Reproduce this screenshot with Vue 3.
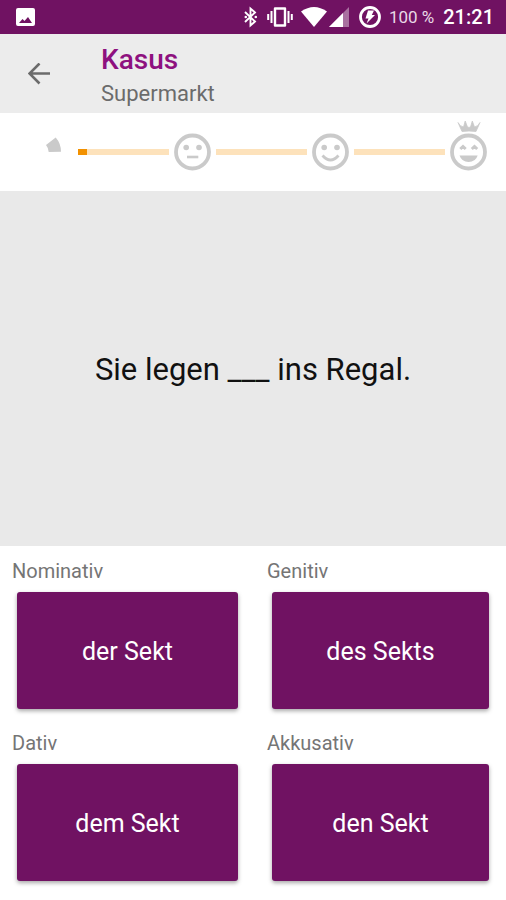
<script setup>
import { ref } from 'vue'

const progress = ref([10, 0, 0])
const faces = ['neutral', 'happy', 'champion']
const answers = [
  { id: 'nominativ', label: 'Nominativ', text: 'der Sekt' },
  { id: 'genitiv', label: 'Genitiv', text: 'des Sekts' },
  { id: 'dativ', label: 'Dativ', text: 'dem Sekt' },
  { id: 'akkusativ', label: 'Akkusativ', text: 'den Sekt' }
]
</script>

<template>
  <div class="screen">
    <div class="status">
      <svg class="picture" width="19" height="19" viewBox="0 0 19 19" aria-hidden="true">
        <path fill="#fff" fill-rule="evenodd" d="M2 0H17Q19 0 19 2V16Q19 18 17 18H2Q0 18 0 16V2Q0 0 2 0ZM3 15H16L12 9L8.500 13L6.500 11Z" />
      </svg>
      <svg class="bluetooth" width="14" height="22" viewBox="0 0 14 22" aria-hidden="true">
        <path d="M1 6L11 15.500L6.500 19.500V2.500L11 6.500L1 16" fill="none" stroke="#fff" stroke-width="1.900" />
        <circle cx="1.800" cy="11" r="1.300" fill="#fff" />
        <circle cx="11.800" cy="11" r="1.300" fill="#fff" />
      </svg>
      <svg class="vibrate" width="26" height="20" viewBox="0 0 26 20" aria-hidden="true">
        <path d="M8 1.500H18V18.500H8Z" fill="none" stroke="#fff" stroke-width="2.400" stroke-linejoin="round" />
        <path d="M4.500 4V16M1.200 7V13M21.500 4V16M24.800 7V13" stroke="#fff" stroke-width="2" />
      </svg>
      <svg class="wifi" width="26" height="20" viewBox="0 0 26 20" aria-hidden="true">
        <path d="M0 4.500Q13 -4.500 26 4.500L13 20Z" fill="#fff" />
      </svg>
      <svg class="signal" width="20" height="20" viewBox="0 0 20 20" aria-hidden="true">
        <path d="M0 20L20 0V20Z" fill="#fff" fill-opacity=".4" />
        <path d="M0 20L14 6V20Z" fill="#fff" />
      </svg>
      <svg class="battery" width="22" height="22" viewBox="0 0 22 22" aria-hidden="true">
        <circle cx="11" cy="11" r="9.500" fill="none" stroke="#fff" stroke-width="2.800" />
        <path d="M9 4.500H15L12.800 9H16L7.500 17.500L9.500 12.500H6.500Z" fill="#fff" />
      </svg>
      <span class="percent">100 %</span>
      <span class="clock">21:21</span>
    </div>

    <header class="bar">
      <button class="back" type="button" aria-label="Zurück">
        <svg width="22" height="22" viewBox="0 0 22 22" aria-hidden="true">
          <path d="M22 10.500H2M11.500 .500L1.500 10.500L11.500 20.500" fill="none" stroke="#6b6b6b" stroke-width="2.600" />
        </svg>
      </button>
      <div class="headings">
        <h1 class="title">Kasus</h1>
        <p class="subtitle">Supermarkt</p>
      </div>
    </header>

    <div class="progress">
      <svg class="face" width="37" height="58" viewBox="0 0 37 58" aria-hidden="true">
        <path d="M10 22L19.700 14.500Q25 20.500 25 28.700L12.700 29Q12.500 25 10 22Z" fill="#cacaca" />
      </svg>
      <template v-for="(face, i) in faces" :key="face">
        <div class="track"><div class="fill" :style="{ width: progress[i] + '%' }"></div></div>
        <svg class="face" width="37" height="58" viewBox="0 0 37 58" aria-hidden="true">
          <circle cx="18.500" cy="29" r="16.500" fill="none" stroke="#cacaca" stroke-width="3.800" />
          <template v-if="face !== 'champion'">
            <circle cx="12.200" cy="24.500" r="2.800" fill="#cacaca" />
            <circle cx="25" cy="24.500" r="2.800" fill="#cacaca" />
          </template>
          <path v-if="face === 'neutral'" d="M13 34H24.300" stroke="#cacaca" stroke-width="2.600" />
          <path v-if="face === 'happy'" d="M10.500 32.500Q18.500 41.500 26.500 32.500" fill="none" stroke="#cacaca" stroke-width="2.800" />
          <template v-if="face === 'champion'">
            <path d="M10.300 26L13 23.500L15.700 26M21.800 26L24.500 23.500L27.200 26" fill="none" stroke="#cacaca" stroke-width="3" />
            <path d="M9.500 32.500H27.700Q25.500 39 18.600 39Q11.700 39 9.500 32.500Z" fill="#cacaca" />
            <path d="M12 8.500L8 -.500Q10 3.500 13.500 4L15.200 -2L17.500 4Q19 4.800 20.500 4L22.300 -2L24.500 4Q28 3.500 30 -.500L26 8.500Q19 7.500 12 8.500Z" fill="#cacaca" stroke="#cacaca" stroke-width=".8" stroke-linejoin="round" />
          </template>
        </svg>
      </template>
    </div>

    <main class="question">Sie legen ___ ins Regal.</main>

    <div class="answers">
      <div v-for="a in answers" :key="a.id" class="answer">
        <label class="case" :for="a.id">{{ a.label }}</label>
        <button :id="a.id" class="choice" type="button">{{ a.text }}</button>
      </div>
    </div>
  </div>
</template>

<style>
body {
  margin: 0;
  background: #fff;
}
</style>

<style scoped>
.screen {
  display: flex;
  flex-direction: column;
  min-height: 100vh;
  font-family: Roboto, "Liberation Sans", sans-serif;
  color: #111;
}
.status {
  display: flex;
  align-items: center;
  box-sizing: border-box;
  height: 34px;
  padding: 0 12px 0 16px;
  background: #701262;
  color: #fff;
}
.picture {
  margin-right: auto;
}
.vibrate {
  margin-left: 9px;
}
.wifi {
  margin-left: 8px;
}
.signal {
  margin-left: 2px;
}
.battery {
  margin-left: 10px;
}
.percent {
  margin-left: 8px;
  font-size: 17px;
  color: #e9d9e6;
}
.clock {
  margin-left: 9px;
  font-size: 20px;
  font-weight: 500;
}
.bar {
  display: flex;
  align-items: center;
  box-sizing: border-box;
  height: 79px;
  padding-left: 18px;
  background: #ececec;
}
.back {
  display: flex;
  align-items: center;
  justify-content: center;
  width: 42px;
  height: 42px;
  margin-right: 41px;
  padding: 0;
  border: 0;
  background: none;
}
.headings {
  padding-top: 7px;
}
.title,
.subtitle {
  margin: 0;
  line-height: 34px;
}
.title {
  font-size: 28px;
  font-weight: 500;
  color: #8e117f;
}
.subtitle {
  font-size: 22px;
  color: #6b6b6b;
}
.progress {
  display: flex;
  align-items: center;
  gap: 5px;
  box-sizing: border-box;
  height: 78px;
  padding: 0 19px 0 36px;
}
.face {
  flex: none;
  overflow: visible;
}
.track {
  flex: 1;
  height: 6px;
  background: #fde2bb;
}
.fill {
  height: 100%;
  background: #f29100;
}
.question {
  display: flex;
  flex: 1;
  align-items: center;
  justify-content: center;
  min-height: 120px;
  padding-top: 2px;
  background: #e9e9e9;
  font-size: 31px;
}
.answers {
  display: grid;
  grid-template-columns: 231fr 227fr;
  gap: 21px 24px;
  padding: 12px 12px 19px;
}
.answer {
  display: flex;
  flex-direction: column;
}
.case {
  font-size: 20px;
  line-height: 26px;
  color: #757575;
}
.choice {
  height: 117px;
  margin: 8px 5px 0;
  padding: 2px 0 0;
  border: 0;
  border-radius: 3px;
  background: #701262;
  box-shadow: 0 2px 4px rgba(0, 0, 0, 0.35);
  color: #fff;
  font-family: inherit;
  font-size: 25px;
}
</style>
